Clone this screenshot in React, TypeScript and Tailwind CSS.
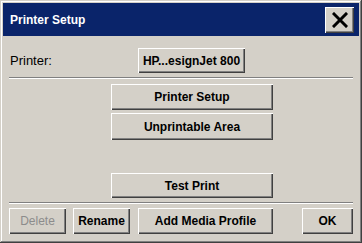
import React from "react";

const btn =
  "flex items-center justify-center bg-[#d4d0c8] text-[12px] font-bold text-black leading-none shadow-[inset_1px_1px_0_#ffffff,inset_-1px_-1px_0_#404040,inset_-2px_-2px_0_#808080]";

function Separator({ className = "" }: { className?: string }) {
  return (
    <div
      className={
        "w-[344px] h-[2px] border-t border-t-[#808080] border-b border-b-white " +
        className
      }
    />
  );
}

export default function App() {
  return (
    <div
      className="w-[362px] h-[243px] bg-[#d4d0c8] p-[3px] flex flex-col shadow-[inset_-1px_-1px_0_#404040,inset_1px_1px_0_#d4d0c8,inset_-2px_-2px_0_#808080,inset_2px_2px_0_#ffffff]"
      style={{ fontFamily: '"Liberation Sans", Arial, sans-serif' }}
    >
      <div className="h-[33px] bg-[#0a246a] flex items-center justify-between pl-[7px] pr-[5px]">
        <span className="text-white text-[12px] font-bold leading-none">
          Printer Setup
        </span>
        <button className={btn + " w-[29px] h-[26px] mt-[1px]"}>
          <svg width="16" height="16" viewBox="0 0 16 16">
            <path
              d="M2 2 L14 14 M14 2 L2 14"
              stroke="#000"
              strokeWidth="3"
              strokeLinecap="square"
            />
          </svg>
        </button>
      </div>

      <div className="flex flex-col px-[6px]">
        <div className="mt-[12px] h-[25px] flex items-center">
          <span className="w-[129px] pl-[1px] text-[13px] text-black leading-none">
            Printer:
          </span>
          <button className={btn + " w-[107px] h-[25px]"}>HP...esignJet 800</button>
        </div>

        <Separator className="mt-[4px]" />

        <button className={btn + " mt-[5px] ml-[102px] w-[162px] h-[26px]"}>
          Printer Setup
        </button>
        <button className={btn + " mt-[3px] ml-[102px] w-[162px] h-[27px]"}>
          Unprintable Area
        </button>
        <button className={btn + " mt-[33px] ml-[102px] w-[162px] h-[25px]"}>
          Test Print
        </button>

        <Separator className="mt-[4px]" />

        <div className="mt-[4px] h-[26px] flex">
          <button className={btn + " w-[57px] h-[26px] !text-[#8c8c8c] font-normal"}>
            Delete
          </button>
          <button className={btn + " ml-[7px] w-[57px] h-[26px]"}>Rename</button>
          <button className={btn + " ml-[8px] w-[135px] h-[26px]"}>
            Add Media Profile
          </button>
          <button className={btn + " ml-[29px] w-[51px] h-[26px]"}>OK</button>
        </div>
      </div>
    </div>
  );
}
